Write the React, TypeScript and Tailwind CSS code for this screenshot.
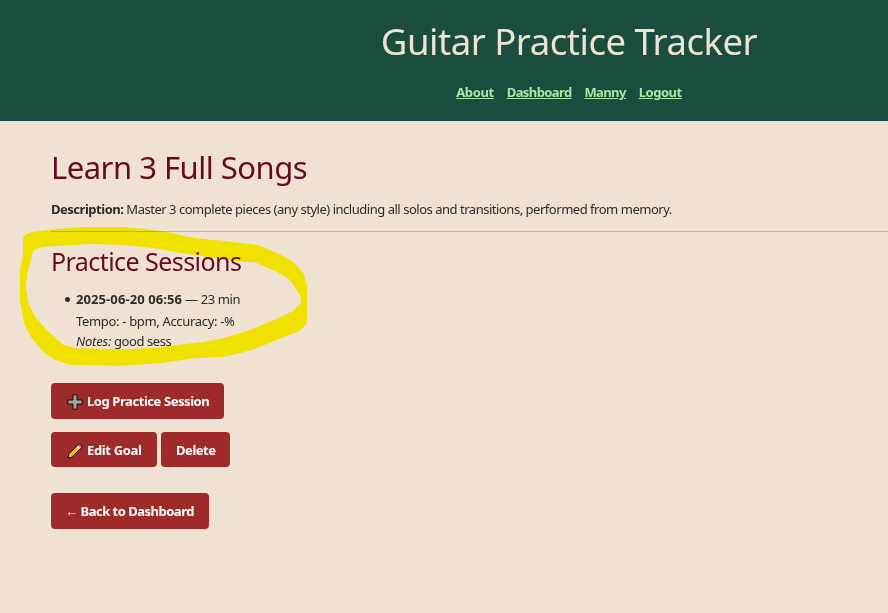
const button =
  "inline-flex items-center rounded bg-[#9e2a2b] text-[13px] font-bold text-white whitespace-nowrap";

function Plus() {
  return (
    <svg className="mr-[4px] h-4 w-4 shrink-0" viewBox="0 0 16 16">
      <path
        d="M6 .8h4V6h5.2v4H10v5.2H6V10H.8V6H6z"
        fill="#a3a3a3"
        stroke="#160d0d"
        strokeWidth="1"
        strokeLinejoin="round"
      />
    </svg>
  );
}

function Pencil() {
  return (
    <svg className="mr-[4px] h-4 w-4 shrink-0" viewBox="0 0 16 16">
      <path d="M1 15l1.2-4.4L11.4 1.4q1.6-1 2.7.4t.5 2.7L5.4 13.8z" fill="#ffb900" stroke="#160d0d" strokeWidth="1" strokeLinejoin="round" />
      <path d="M11 2.6l.8-.8q1.1-.6 1.9.3t.5 1.9l-.9.9z" fill="#f04b57" />
      <path d="M9.7 3.9l1.4-1.4 2.4 2.4-1.4 1.4z" fill="#dcdce0" />
      <path d="M1.8 14.2l.9-3.1 2.2 2.2z" fill="#e8c7a0" />
    </svg>
  );
}

export default function App() {
  return (
    <div className="relative h-[613px] w-full overflow-hidden bg-[#f0e2d2] font-['Noto_Sans','Open_Sans',sans-serif] text-[13px] text-[#2b2b2b]">
      <div className="w-[1138px]">
        <header className="flex h-[121px] flex-col items-center bg-[#1b4d3e] pt-[16px]">
          <h1 className="h-[50px] text-[36.5px] leading-[50px] tracking-[-0.48px] text-[#f0e2d2] whitespace-nowrap">
            Guitar Practice Tracker
          </h1>
          <nav className="mt-[16px] flex h-5 gap-[12.9px] font-bold leading-5 text-[#a8e6a3]">
            <a className="tracking-[-0.35px] underline">About</a>
            <a className="tracking-[-0.6px] underline">Dashboard</a>
            <a className="tracking-[-0.6px] underline">Manny</a>
            <a className="tracking-[-0.45px] underline">Logout</a>
          </nav>
        </header>
        <main className="pl-[51px] pt-[26px] whitespace-nowrap">
          <h2 className="h-10 text-[31px] leading-10 tracking-[-0.5px] text-[#6a0822]">
            Learn 3 Full Songs
          </h2>
          <p className="mt-[12px] h-5 leading-5 tracking-[-0.475px]">
            <b className="tracking-[-0.48px]">Description:</b> Master 3 complete pieces (any style) including all solos and transitions, performed from memory.
          </p>
          <hr className="mt-[12px] border-t border-[#bfb4a8]" />
          <h3 className="mt-[13px] h-8 text-[25px] leading-8 tracking-[-0.56px] text-[#6a0822]">
            Practice Sessions
          </h3>
          <ul className="mt-[11px] pl-[14px]">
            <li className="flex">
              <span className="mr-[6px] mt-[9px] h-[5px] w-[5px] rounded-full bg-[#2b2b2b]" />
              <div>
                <p className="h-[22px] leading-[22px] tracking-[-0.37px]">
                  <b className="tracking-[0.09px]">2025-06-20 06:56</b> — 23 min
                </p>
                <p className="h-[21px] leading-[23px] tracking-[-0.33px]">Tempo: - bpm, Accuracy: -%</p>
                <p className="h-5 leading-5 tracking-[-0.42px]">
                  <i className="tracking-[-0.2px]">Notes:</i> good sess
                </p>
              </div>
            </li>
          </ul>
          <div className="mt-[32px] flex">
            <a className={button + " h-9 w-[173px] pl-4 pt-px tracking-[-0.43px]"}>
              <Plus />
              <span>Log Practice Session</span>
            </a>
          </div>
          <div className="mt-[13px] flex h-[35px] gap-1">
            <a className={button + " h-[35px] w-[106px] pl-4 pt-[2px] tracking-[-0.35px]"}>
              <Pencil />
              <span>Edit Goal</span>
            </a>
            <a className={button + " h-[35px] w-[69px] pl-[15px] pt-[2px] tracking-[-0.45px]"}>Delete</a>
          </div>
          <div className="mt-[26px] flex">
            <a className={button + " h-9 w-[158px] pl-[14px] pt-px tracking-[-0.5px]"}>
              <span className="mr-[3px] font-normal">←</span>
              <span>Back to Dashboard</span>
            </a>
          </div>
        </main>
      </div>
      {/* Highlighter ring around the session list */}
      <svg
        className="pointer-events-none absolute left-[10px] top-[220px] mix-blend-multiply"
        width="310"
        height="150"
        viewBox="0 0 930 450"
      >
        <path
          fillRule="evenodd"
          fill="#fffe00"
          d="M40 50L50 42L68 36L130 28L230 21L330 21L400 26L475 37L520 47L560 55L640 63L745 75L800 98L850 125L880 160L891 195V310L870 332L820 352L740 385L690 400L640 410L550 415L450 430L330 437L180 434L135 420L100 395L62 350L42 310L30 240V150L38 110ZM70 90L60 130L52 160L48 205L55 250L75 290L110 330L160 375L200 385L350 388L440 383L520 373L580 366L640 355L720 330L800 297L850 272L873 248L870 225L840 180L800 155L735 127L690 125L600 112L560 106L500 97L430 84L330 74L240 72L100 80Z"
        />
      </svg>
    </div>
  );
}
